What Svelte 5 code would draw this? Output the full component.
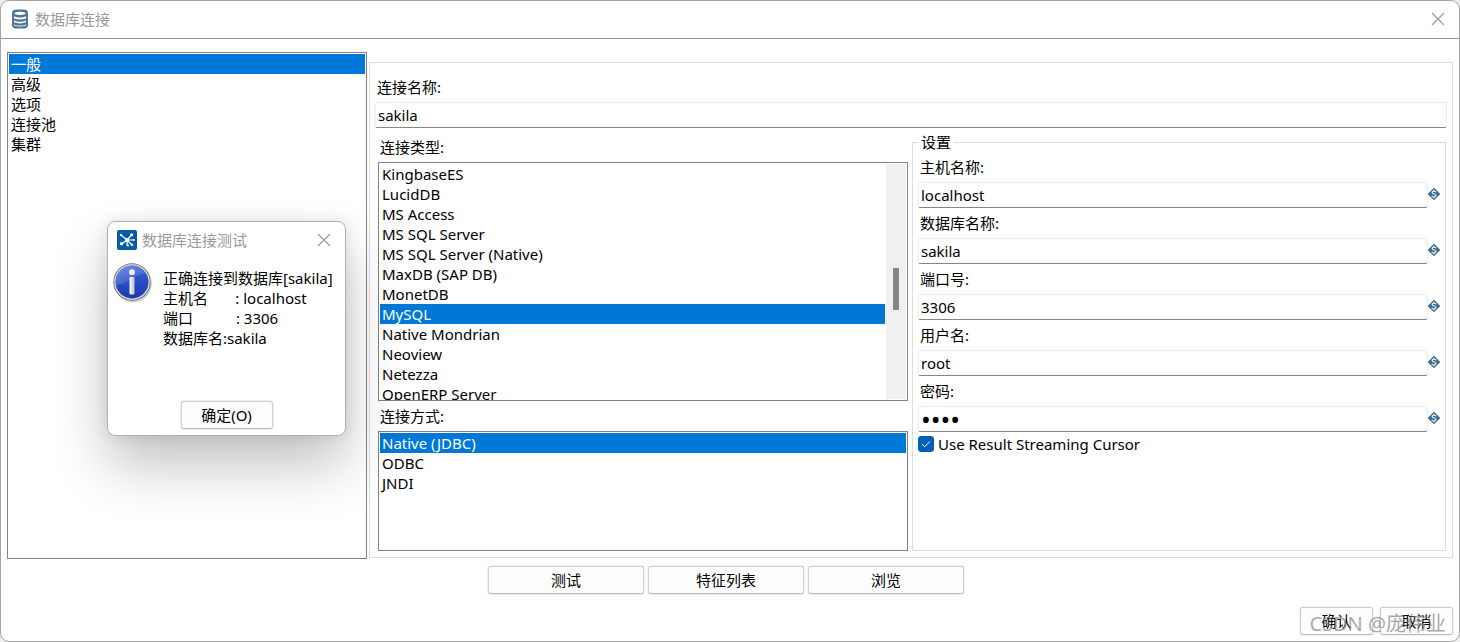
<script lang="ts">
  interface Field {
    id: string;
    label: string;
    type: 'text' | 'password';
    value: string;
  }

  const sections = ['一般', '高级', '选项', '连接池', '集群'];
  const databaseTypes = [
    'KingbaseES',
    'LucidDB',
    'MS Access',
    'MS SQL Server',
    'MS SQL Server (Native)',
    'MaxDB (SAP DB)',
    'MonetDB',
    'MySQL',
    'Native Mondrian',
    'Neoview',
    'Netezza',
    'OpenERP Server',
  ];
  const accessMethods = ['Native (JDBC)', 'ODBC', 'JNDI'];

  let section = $state('一般');
  let databaseType = $state('MySQL');
  let accessMethod = $state('Native (JDBC)');
  let connectionName = $state('sakila');
  let streaming = $state(true);
  let showResult = $state(true);

  let fields = $state<Field[]>([
    { id: 'host', label: '主机名称:', type: 'text', value: 'localhost' },
    { id: 'database', label: '数据库名称:', type: 'text', value: 'sakila' },
    { id: 'port', label: '端口号:', type: 'text', value: '3306' },
    { id: 'user', label: '用户名:', type: 'text', value: 'root' },
    { id: 'password', label: '密码:', type: 'password', value: 'root' },
  ]);

  const resultText = [
    '正确连接到数据库[sakila]',
    '主机名       : localhost',
    '端口           : 3306',
    '数据库名:sakila',
  ].join('\n');
</script>

{#snippet options(items: string[], selected: string, select: (item: string) => void)}
  {#each items as item (item)}
    <button
      class="option"
      class:selected={item === selected}
      role="option"
      aria-selected={item === selected}
      onclick={() => select(item)}
    >{item}</button>
  {/each}
{/snippet}

{#snippet closeIcon()}
  <svg width="14" height="14" viewBox="0 0 14 14" fill="none" stroke="#999" stroke-width="1.1">
    <path d="M1 1l12 12M13 1L1 13" />
  </svg>
{/snippet}

<div class="window">
  <header class="titlebar">
    <svg width="18" height="20" viewBox="0 0 18 20">
      <rect x="1" y="0.5" width="16" height="19" rx="4" fill="#537593" />
      <path d="M4 3.6q5-1.8 10 0q1.2 1.2 0 1.7q-5 1.6-10 0q-1.2-.6 0-1.7z" fill="#fff" />
      <path d="M3 7.2q6 2.5 12 0v2.3q-6 2.2-12 0zM3 11.6q6 2.4 12 0v1.7q-6 2.2-12 0zM3 15.4q6 2.4 12 0v1q-6 2.2-12 0z" fill="#f4f7fa" />
    </svg>
    <h1>数据库连接</h1>
    <button class="close" aria-label="关闭">{@render closeIcon()}</button>
  </header>

  <main class="content">
    <div class="list" role="listbox" aria-label="分类">
      {@render options(sections, section, (item) => (section = item))}
    </div>

    <section class="panel">
      <label class="label" for="connection-name">连接名称:</label>
      <input id="connection-name" class="text-input" type="text" bind:value={connectionName} />

      <div class="columns">
        <div class="types">
          <div class="label" id="type-label">连接类型:</div>
          <div class="list scroll-list">
            <div class="options" role="listbox" aria-labelledby="type-label">
              {@render options(databaseTypes, databaseType, (item) => (databaseType = item))}
            </div>
            <div class="scrollbar"><div class="thumb"></div></div>
          </div>
          <div class="label" id="access-label">连接方式:</div>
          <div class="list" role="listbox" aria-labelledby="access-label">
            {@render options(accessMethods, accessMethod, (item) => (accessMethod = item))}
          </div>
        </div>

        <fieldset class="settings">
          <legend>设置</legend>
          {#each fields as field (field.id)}
            <label class="label" for={field.id}>{field.label}</label>
            <div class="field-row">
              <input id={field.id} class="text-input" type={field.type} bind:value={field.value} />
              <svg width="12" height="14" viewBox="0 0 12 14">
                <path d="M6 0L12 6L6 12L0 6z" fill="#3d6a8d" stroke="#3d6a8d" stroke-width=".6" />
                <path d="M8 4.4Q7.6 3.1 6 3.1Q4.1 3.1 4.1 4.5Q4.1 5.6 6 6Q8 6.4 8 7.6Q8 9 6 9Q4.3 9 3.9 7.7M6 1.8v1.4M6 9v1.4" fill="none" stroke="#e8eef3" stroke-width="1.2" />
              </svg>
            </div>
          {/each}
          <label class="check">
            <input type="checkbox" bind:checked={streaming} />
            <span>Use Result Streaming Cursor</span>
          </label>
        </fieldset>
      </div>
    </section>
  </main>

  <div class="actions">
    <button class="btn wide" onclick={() => (showResult = true)}>测试</button>
    <button class="btn wide">特征列表</button>
    <button class="btn wide">浏览</button>
  </div>

  <footer class="footer">
    <button class="btn">确认</button>
    <button class="btn">取消</button>
  </footer>

  <span class="watermark">CSDN @庞伟业</span>

  {#if showResult}
    <div class="dialog" role="dialog" aria-labelledby="result-title">
      <div class="dialog-title">
        <svg width="20" height="20" viewBox="0 0 20 20">
          <rect width="20" height="20" rx="2" fill="#005da6" />
          <path d="M10 10L4 5M10 10L15 4.5M10 10L16.5 10M10 10L15 15M10 10L10 15.5M10 10L4.5 14" stroke="#fff" stroke-width="1.2" />
          <g fill="#fff">
            <circle cx="10" cy="10" r="2" />
            <circle cx="4" cy="5" r="1.2" />
            <circle cx="14.7" cy="4.7" r="1.5" />
            <circle cx="16.7" cy="10" r="1.1" />
            <circle cx="15" cy="14.8" r="1.3" />
            <circle cx="10.8" cy="15.4" r="1.1" />
            <circle cx="4.6" cy="13.8" r="1.7" />
          </g>
        </svg>
        <h2 id="result-title">数据库连接测试</h2>
        <button class="close" aria-label="关闭" onclick={() => (showResult = false)}>{@render closeIcon()}</button>
      </div>
      <div class="dialog-body">
        <svg width="40" height="40" viewBox="0 0 40 40">
          <defs>
            <linearGradient id="ball" x1="0" y1="0" x2="0" y2="1">
              <stop offset="0" stop-color="#3d63d2" />
              <stop offset="1" stop-color="#1738b4" />
            </linearGradient>
            <linearGradient id="shine" x1="0" y1="0" x2="1" y2="1">
              <stop offset="0" stop-color="#9fb6f3" stop-opacity=".6" />
              <stop offset="1" stop-color="#6d8de6" stop-opacity=".1" />
            </linearGradient>
            <linearGradient id="metal" x1="0" y1="0" x2="1" y2="0">
              <stop offset="0" stop-color="#fff" />
              <stop offset="1" stop-color="#b9bcc4" />
            </linearGradient>
          </defs>
          <circle cx="20" cy="20.5" r="18.7" fill="#000" opacity=".22" />
          <circle cx="19" cy="19" r="18.7" fill="#6f747c" />
          <circle cx="19" cy="19" r="17.8" fill="#e2e4e8" />
          <circle cx="19" cy="19" r="16.3" fill="url(#ball)" stroke="#34488c" stroke-width=".6" />
          <path d="M3 21.5A16 16 0 0 1 32.5 10.5Q20.500 12.500 14.500 18.500Q9.500 22.500 3 21.500z" fill="url(#shine)" />
          <circle cx="19" cy="9.200" r="2.900" fill="#f4f5f8" />
          <rect x="16.500" y="14" width="5" height="17.500" rx="1" fill="url(#metal)" />
        </svg>
        <p>{resultText}</p>
      </div>
      <button class="btn confirm" onclick={() => (showResult = false)}>确定(O)</button>
    </div>
  {/if}
</div>

<style>
  :global(body) {
    background: #eee;
  }

  .window,
  .window * {
    box-sizing: border-box;
  }

  .window {
    position: relative;
    display: flex;
    flex-direction: column;
    min-height: 100vh;
    border: 1px solid #a6a6a6;
    border-radius: 9px;
    background: #fff;
    color: #000;
    font-family: 'Noto Sans', 'Noto Sans CJK SC', sans-serif;
    font-size: 15px;
    line-height: 20px;
    overflow: hidden;
  }

  button,
  input {
    font: inherit;
    color: inherit;
  }

  .titlebar {
    display: flex;
    align-items: center;
    gap: 6px;
    height: 38px;
    padding: 0 14px 2px 10px;
    border-bottom: 1px solid #949494;
  }

  h1,
  h2 {
    flex: 1;
    margin: 0;
    font-size: 15px;
    font-weight: 400;
    line-height: 20px;
    color: #999;
  }

  .close {
    display: flex;
    padding: 0;
    border: none;
    background: none;
  }

  .content {
    flex: 1;
    display: grid;
    grid-template-columns: 360px minmax(0, 1fr);
    gap: 2px;
    padding: 13px 6px 0;
  }

  .list {
    padding: 1px;
    border: 1px solid #7f828a;
    background: #fff;
    overflow: hidden;
  }

  .option {
    display: block;
    width: 100%;
    height: 20px;
    padding: 0 2px;
    border: none;
    background: none;
    text-align: left;
    white-space: nowrap;
  }

  .option.selected {
    background: #0078d7;
    color: #fff;
  }

  .panel {
    display: flex;
    flex-direction: column;
    margin: 10px 0 1px;
    padding: 9px 5px 6px;
    border: 1px solid #dcdcdc;
  }

  .label {
    display: block;
    padding: 0 2px;
    line-height: 30px;
  }

  .text-input {
    width: 100%;
    height: 26px;
    padding: 0 2px;
    border: 1px solid #ebebeb;
    border-bottom-color: #868686;
    border-radius: 2px;
    background: #fff;
    outline: none;
  }

  .text-input[type='password'] {
    font-size: 26px;
    line-height: 24px;
  }

  .columns {
    flex: 1;
    display: grid;
    grid-template-columns: minmax(0, 530fr) minmax(0, 534fr);
    gap: 4px;
    padding: 4px 1px 0 3px;
  }

  .types {
    display: grid;
    grid-template-rows: 30px minmax(0, 2fr) 30px minmax(0, 1fr);
  }

  .scroll-list {
    display: flex;
    gap: 1px;
  }

  .options {
    flex: 1;
    height: 0;
  }

  .scrollbar {
    width: 20px;
    padding: 104px 7px 0;
    background: #f0f0f0;
  }

  .thumb {
    height: 42px;
    background: #858585;
  }

  .settings {
    min-width: 0;
    margin: 0;
    padding: 0 5px;
    border: 1px solid #dcdcdc;
  }

  legend {
    padding: 0 3px;
  }

  .field-row {
    display: flex;
    align-items: center;
  }

  .field-row svg {
    flex-shrink: 0;
  }

  .check {
    display: flex;
    align-items: center;
    gap: 4px;
    height: 24px;
  }

  .check input {
    appearance: none;
    width: 16px;
    height: 16px;
    margin: 0;
    border: 1px solid #868686;
    border-radius: 3px;
  }

  .check input:checked {
    border-color: #005fb8;
    background: #005fb8 url("data:image/svg+xml,%3Csvg xmlns='http://www.w3.org/2000/svg' viewBox='0 0 14 14'%3E%3Cpath d='M3 7.2l2.7 2.6L11 4.4' fill='none' stroke='white'/%3E%3C/svg%3E");
  }

  .actions {
    display: flex;
    justify-content: center;
    gap: 4px;
    padding: 7px 8px 0 0;
  }

  .btn {
    min-width: 73px;
    height: 28px;
    padding: 0 8px;
    border: 1px solid #d0d0d0;
    border-bottom-color: #bababa;
    border-radius: 3px;
    background: #fdfdfd;
    box-shadow: 0 0 0 1px #f0f0f0;
  }

  .wide {
    width: 156px;
  }

  .footer {
    display: flex;
    justify-content: flex-end;
    gap: 7px;
    padding: 13px 6px 6px;
  }

  .watermark {
    position: absolute;
    right: 13px;
    bottom: 3px;
    font-size: 20px;
    line-height: 28px;
    color: rgba(130, 130, 130, 0.7);
    pointer-events: none;
  }

  .dialog {
    position: absolute;
    left: 106px;
    top: 220px;
    display: flex;
    flex-direction: column;
    width: 239px;
    height: 215px;
    padding: 0 5px 6px;
    border: 1px solid #b0b0b0;
    border-radius: 8px;
    background: #fff;
    box-shadow: 0 30px 56px rgba(0, 0, 0, 0.24), 0 0 16px rgba(0, 0, 0, 0.1);
  }

  .dialog-title {
    display: flex;
    align-items: center;
    gap: 5px;
    height: 36px;
    padding: 0 9px 0 4px;
  }

  .dialog-body {
    flex: 1;
    display: flex;
    gap: 10px;
    padding-top: 5px;
  }

  .dialog-body svg {
    flex-shrink: 0;
  }

  .dialog-body p {
    margin: 5px 0 0;
    white-space: pre;
  }

  .confirm {
    align-self: center;
    width: 92px;
  }
</style>
